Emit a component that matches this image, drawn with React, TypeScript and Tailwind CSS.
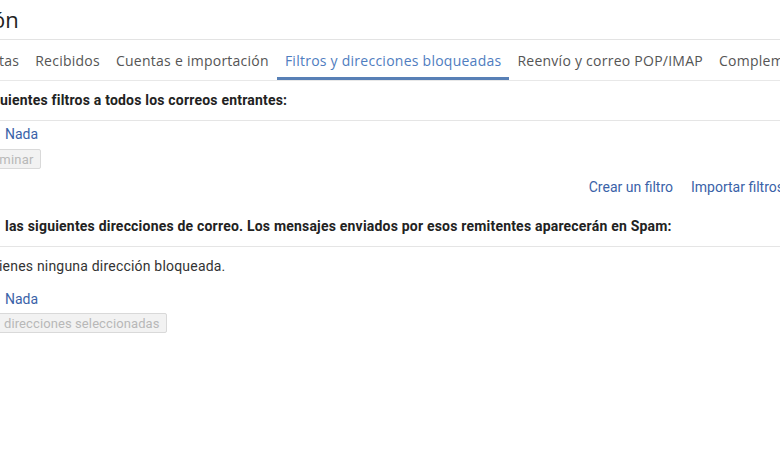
import React from 'react';

const tabs = ['tas', 'Recibidos', 'Cuentas e importación', 'Filtros y direcciones bloqueadas', 'Reenvío y correo POP/IMAP', 'Complementos'];
const ACTIVE = 'Filtros y direcciones bloqueadas';

export default function App() {
  return (
    <div className="w-[780px] h-[468px] bg-white overflow-hidden relative" style={{ fontFamily: 'Roboto, "Liberation Sans", sans-serif' }}>
      {/* Title */}
      <div className="h-[40px] flex items-center border-b border-[#e3e3e3]">
        <h1 className="text-[22px] text-[#222] leading-none -ml-[8px] pb-[2px]" style={{ fontFamily: '"Open Sans", sans-serif' }}>ón</h1>
      </div>

      {/* Tabs */}
      <div className="h-[41px] flex items-stretch border-b border-[#e8e8e8] -ml-[9px] whitespace-nowrap tracking-[0.25px]" style={{ fontFamily: '"Open Sans", sans-serif' }}>
        {tabs.map(t => (
          <div
            key={t}
            className={
              t === ACTIVE
                ? 'px-[8px] flex items-center text-[14px] text-[#4f7dc0] border-b-[3px] border-[#5880b6] pt-[3px]'
                : 'px-[8px] flex items-center text-[14px] text-[#555]'
            }
          >
            {t}
          </div>
        ))}
      </div>

      {/* Filters */}
      <div className="h-[40px] flex items-center border-b border-[#e5e5e5] whitespace-nowrap">
        <p className="text-[14px] font-bold text-[#222] tracking-[0.2px]">uientes filtros a todos los correos entrantes:</p>
      </div>
      <div className="pt-[3px] pl-[5px] text-[14px] text-[#3a62a8] whitespace-nowrap">Nada</div>
      <div className="mt-[4px] flex">
        <button disabled className="-ml-[22px] h-[20px] px-[6px] bg-[#f2f2f2] border border-[#d9d9d9] rounded-[2px] text-[13px] text-[#b8b8b8] leading-none tracking-[0.2px]">
          Eliminar
        </button>
      </div>
      <div className="flex justify-end gap-[18px] mt-[8px] -mr-[4px] text-[14px] text-[#3a62a8] whitespace-nowrap">
        <span>Crear un filtro</span>
        <span>Importar filtros</span>
      </div>

      {/* Blocked addresses */}
      <div className="mt-[8px] h-[41px] flex items-center border-b border-[#e5e5e5] whitespace-nowrap">
        <p className="text-[14px] font-bold text-[#222] pl-[5px] tracking-[0.2px]">las siguientes direcciones de correo. Los mensajes enviados por esos remitentes aparecerán en Spam:</p>
      </div>
      <p className="mt-[9px] text-[14px] text-[#333] -ml-[1px] tracking-[0.2px] whitespace-nowrap">ienes ninguna dirección bloqueada.</p>
      <div className="mt-[12px] pl-[5px] text-[14px] text-[#3a62a8] whitespace-nowrap">Nada</div>
      <div className="mt-[3px] flex">
        <button disabled className="-ml-[3px] h-[20px] px-[6px] bg-[#f2f2f2] border border-[#d9d9d9] rounded-[2px] text-[13px] text-[#b8b8b8] leading-none tracking-[0.1px]">
          direcciones seleccionadas
        </button>
      </div>
    </div>
  );
}
